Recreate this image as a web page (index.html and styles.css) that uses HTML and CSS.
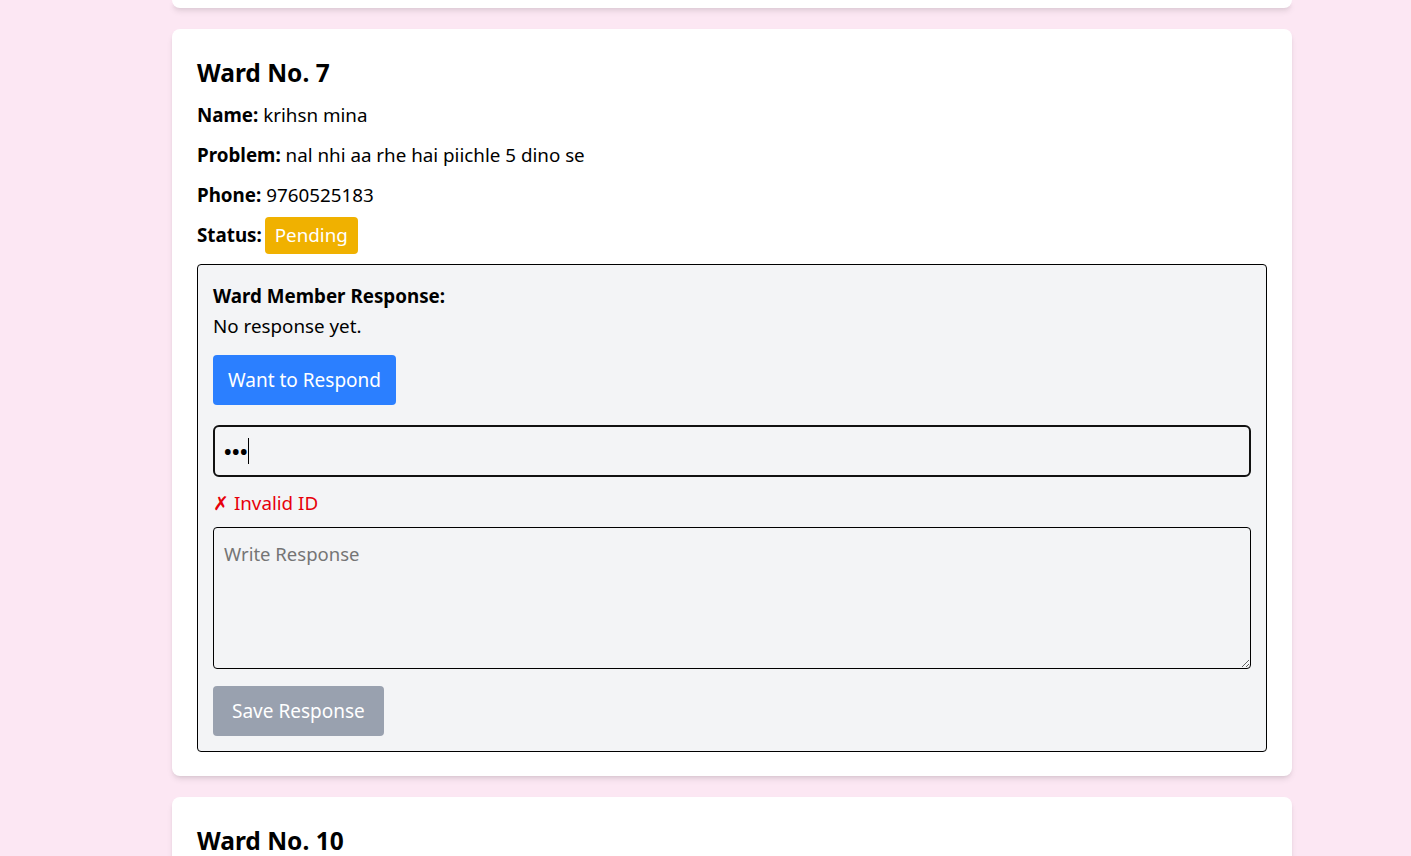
FILE: index.html
```html
<!DOCTYPE html>
<html lang="en">
<head>
<meta charset="utf-8">
<title>Ward Complaints</title>
<link rel="stylesheet" href="styles.css">
</head>
<body>
<main class="page">
  <div class="card card-stub"></div>

  <section class="card">
    <h2 class="ward-title">Ward No. 7</h2>
    <p class="field"><strong>Name:</strong> krihsn mina</p>
    <p class="field"><strong>Problem:</strong> nal nhi aa rhe hai piichle 5 dino se</p>
    <p class="field"><strong>Phone:</strong> 9760525183</p>
    <p class="field field-status"><strong>Status:</strong> <span class="badge">Pending</span></p>

    <div class="response">
      <p class="response-label">Ward Member Response:</p>
      <p class="response-text">No response yet.</p>
      <button class="btn btn-blue" type="button">Want to Respond</button>
      <div class="id-input"><span class="dots">•••</span><span class="caret"></span></div>
      <p class="error"><span class="cross">✗</span> Invalid ID</p>
      <textarea class="response-area" placeholder="Write Response"></textarea>
      <button class="btn btn-gray" type="button" disabled>Save Response</button>
    </div>
  </section>

  <section class="card card-last">
    <h2 class="ward-title">Ward No. 10</h2>
  </section>
</main>
</body>
</html>
```
FILE: styles.css
```css
html, body {
  margin: 0;
  padding: 0;
  background: #fce7f3;
  height: 856px;
  overflow: hidden;
}

body {
  font-family: "Noto Sans", "Open Sans", sans-serif;
  color: #000;
}

.page {
  width: 1120px;
  padding-left: 172px;
  display: flex;
  flex-direction: column;
  gap: 21px;
}

.card {
  background: #fff;
  border-radius: 8px;
  box-shadow: 0 4px 6px -1px rgba(0,0,0,0.1), 0 2px 4px -2px rgba(0,0,0,0.1);
  padding: 24px 25px 24px;
}

.card-stub {
  height: 8px;
  padding: 0;
  border-radius: 0 0 8px 8px;
}

.card-last {
  padding-bottom: 40px;
}

.ward-title {
  margin: 0 0 8px;
  font-size: 24.5px;
  line-height: 40px;
  font-weight: 700;
}

.field {
  margin: 0 0 12px;
  font-size: 18.8px;
  line-height: 28px;
}

.field-status {
  margin-bottom: 15px;
}

.badge {
  background: #f0b100;
  color: #fff;
  padding: 5px 10px 6px;
  margin-left: -2px;
  border-radius: 4px;
}

.response {
  background: #f3f4f6;
  border: 1px solid #000;
  border-radius: 4px;
  padding: 17px 15px 15px;
  display: flex;
  flex-direction: column;
  align-items: flex-start;
}

.response-label {
  margin: 0 0 2px;
  font-size: 18.8px;
  line-height: 28px;
  font-weight: 700;
}

.response-text {
  margin: 0 0 15px;
  font-size: 18.8px;
  line-height: 28px;
}

.btn {
  font-family: inherit;
  font-size: 19px;
  line-height: 28px;
  height: 50px;
  padding: 0 15px;
  border: none;
  border-radius: 4px;
  color: #fff;
}

.btn-blue {
  background: #2b7fff;
}

.btn-gray {
  background: #99a1af;
  margin-top: 17px;
  padding: 0 19px;
}

.id-input {
  box-sizing: border-box;
  align-self: stretch;
  margin-top: 20px;
  height: 52px;
  border: 2px solid #111;
  border-radius: 6px;
  padding: 0 9px;
  display: flex;
  align-items: center;
  font-size: 20px;
}

.dots {
  font-weight: 700;
  letter-spacing: 0.5px;
}

.caret {
  width: 1px;
  height: 26px;
  background: #000;
}

.error {
  margin: 12px 0 9px;
  color: #e7000b;
  font-size: 18.8px;
  line-height: 28px;
}

.cross {
  font-family: "DejaVu Sans", sans-serif;
  font-weight: 300;
}

.response-area {
  box-sizing: border-box;
  align-self: stretch;
  height: 142px;
  border: 1px solid #000;
  border-radius: 4px;
  background: #f3f4f6;
  padding: 12px 10px;
  font-family: inherit;
  font-size: 18.5px;
  line-height: 28px;
  resize: vertical;
  margin: 0;
}

.response-area::placeholder {
  color: #757575;
}
```
